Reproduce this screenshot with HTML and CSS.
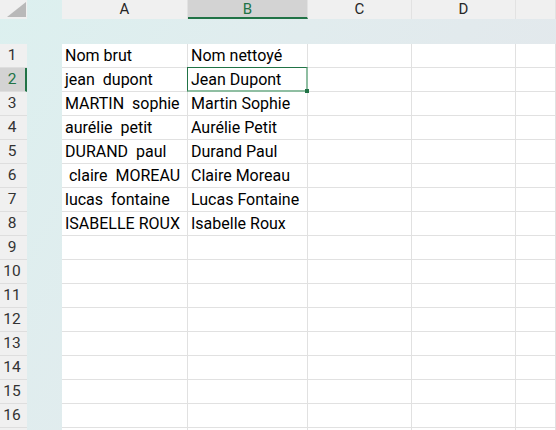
FILE: index.html
```html
<!DOCTYPE html>
<html lang="fr">
<head>
<meta charset="utf-8">
<title>Feuille</title>
<link rel="stylesheet" href="styles.css">
</head>
<body>
<div class="sheet">
  <div class="corner"><span class="tri"></span></div>
  <div class="gap"></div>
  <div class="colhead">A</div>
  <div class="colhead active">B</div>
  <div class="colhead">C</div>
  <div class="colhead">D</div>
  <div class="colhead"></div>

  <div class="band"></div>

  <div class="rowhead">1</div><div class="gap"></div>
  <div class="cell">Nom brut</div><div class="cell">Nom nettoyé</div><div class="cell"></div><div class="cell"></div><div class="cell"></div>

  <div class="rowhead active">2</div><div class="gap"></div>
  <div class="cell">jean  dupont</div><div class="cell selected">Jean Dupont<span class="sel"><span class="handle"></span></span></div><div class="cell"></div><div class="cell"></div><div class="cell"></div>

  <div class="rowhead">3</div><div class="gap"></div>
  <div class="cell">MARTIN  sophie</div><div class="cell">Martin Sophie</div><div class="cell"></div><div class="cell"></div><div class="cell"></div>

  <div class="rowhead">4</div><div class="gap"></div>
  <div class="cell">aurélie  petit</div><div class="cell">Aurélie Petit</div><div class="cell"></div><div class="cell"></div><div class="cell"></div>

  <div class="rowhead">5</div><div class="gap"></div>
  <div class="cell">DURAND  paul</div><div class="cell">Durand Paul</div><div class="cell"></div><div class="cell"></div><div class="cell"></div>

  <div class="rowhead">6</div><div class="gap"></div>
  <div class="cell"> claire  MOREAU</div><div class="cell">Claire Moreau</div><div class="cell"></div><div class="cell"></div><div class="cell"></div>

  <div class="rowhead">7</div><div class="gap"></div>
  <div class="cell">lucas  fontaine</div><div class="cell">Lucas Fontaine</div><div class="cell"></div><div class="cell"></div><div class="cell"></div>

  <div class="rowhead">8</div><div class="gap"></div>
  <div class="cell">ISABELLE ROUX</div><div class="cell">Isabelle Roux</div><div class="cell"></div><div class="cell"></div><div class="cell"></div>

  <div class="rowhead">9</div><div class="gap"></div>
  <div class="cell"></div><div class="cell"></div><div class="cell"></div><div class="cell"></div><div class="cell"></div>

  <div class="rowhead">10</div><div class="gap"></div>
  <div class="cell"></div><div class="cell"></div><div class="cell"></div><div class="cell"></div><div class="cell"></div>

  <div class="rowhead">11</div><div class="gap"></div>
  <div class="cell"></div><div class="cell"></div><div class="cell"></div><div class="cell"></div><div class="cell"></div>

  <div class="rowhead">12</div><div class="gap"></div>
  <div class="cell"></div><div class="cell"></div><div class="cell"></div><div class="cell"></div><div class="cell"></div>

  <div class="rowhead">13</div><div class="gap"></div>
  <div class="cell"></div><div class="cell"></div><div class="cell"></div><div class="cell"></div><div class="cell"></div>

  <div class="rowhead">14</div><div class="gap"></div>
  <div class="cell"></div><div class="cell"></div><div class="cell"></div><div class="cell"></div><div class="cell"></div>

  <div class="rowhead">15</div><div class="gap"></div>
  <div class="cell"></div><div class="cell"></div><div class="cell"></div><div class="cell"></div><div class="cell"></div>

  <div class="rowhead">16</div><div class="gap"></div>
  <div class="cell"></div><div class="cell"></div><div class="cell"></div><div class="cell"></div><div class="cell"></div>

  <div class="rowhead"></div><div class="gap"></div>
  <div class="cell"></div><div class="cell"></div><div class="cell"></div><div class="cell"></div><div class="cell"></div>
</div>
</body>
</html>
```

FILE: styles.css
```css
* {
  box-sizing: border-box;
}

html, body {
  margin: 0;
  padding: 0;
  width: 556px;
  height: 430px;
  overflow: hidden;
}

body {
  font-family: Roboto, "Liberation Sans", sans-serif;
  background: linear-gradient(120deg, #dcf0ef 0%, #e1ecee 40%, #e4e6eb 100%);
}

.sheet {
  display: grid;
  grid-template-columns: 27px 35px 126px 120px 104px 104px 1fr;
  grid-template-rows: 19px 25px repeat(17, 24px);
  width: 556px;
}

.corner {
  background: #f0f0f0;
  position: relative;
}

.tri {
  position: absolute;
  right: 1px;
  bottom: 2px;
  width: 0;
  height: 0;
  border-left: 19px solid transparent;
  border-bottom: 15px solid #b9b9b9;
}

.gap {
  background: transparent;
}

.colhead {
  background: #f0f0f0;
  border-right: 1px solid #e2e2e2;
  color: #262626;
  font-size: 15px;
  line-height: 19px;
  text-align: center;
}

.colhead.active {
  background: #d3d3d3;
  color: #217346;
  border-bottom: 2px solid #217346;
  line-height: 18px;
}

.band {
  grid-column: 1 / -1;
}

.rowhead {
  background: #f0f0f0;
  border-bottom: 1px solid #dedede;
  color: #333333;
  font-size: 15.5px;
  line-height: 23px;
  text-align: center;
  padding-right: 3px;
}

.rowhead.active {
  background: #d3d3d3;
  color: #217346;
  border-right: 2px solid #217346;
  padding-right: 1px;
}

.cell {
  background: #ffffff;
  border-right: 1px solid #e1e1e1;
  border-bottom: 1px solid #e1e1e1;
  font-size: 16px;
  line-height: 23px;
  padding-left: 3px;
  color: #000000;
  white-space: pre;
  overflow: visible;
}

.selected {
  position: relative;
}

.sel {
  position: absolute;
  left: -1px;
  top: -1px;
  right: -1px;
  bottom: -1px;
  border-top: 1px solid #217346;
  border-left: 1px solid #217346;
  border-right: 2px solid #8fbea2;
  border-bottom: 2px solid #8fbea2;
}

.handle {
  position: absolute;
  right: -3px;
  bottom: -3px;
  width: 4px;
  height: 4px;
  background: #217346;
}
```
